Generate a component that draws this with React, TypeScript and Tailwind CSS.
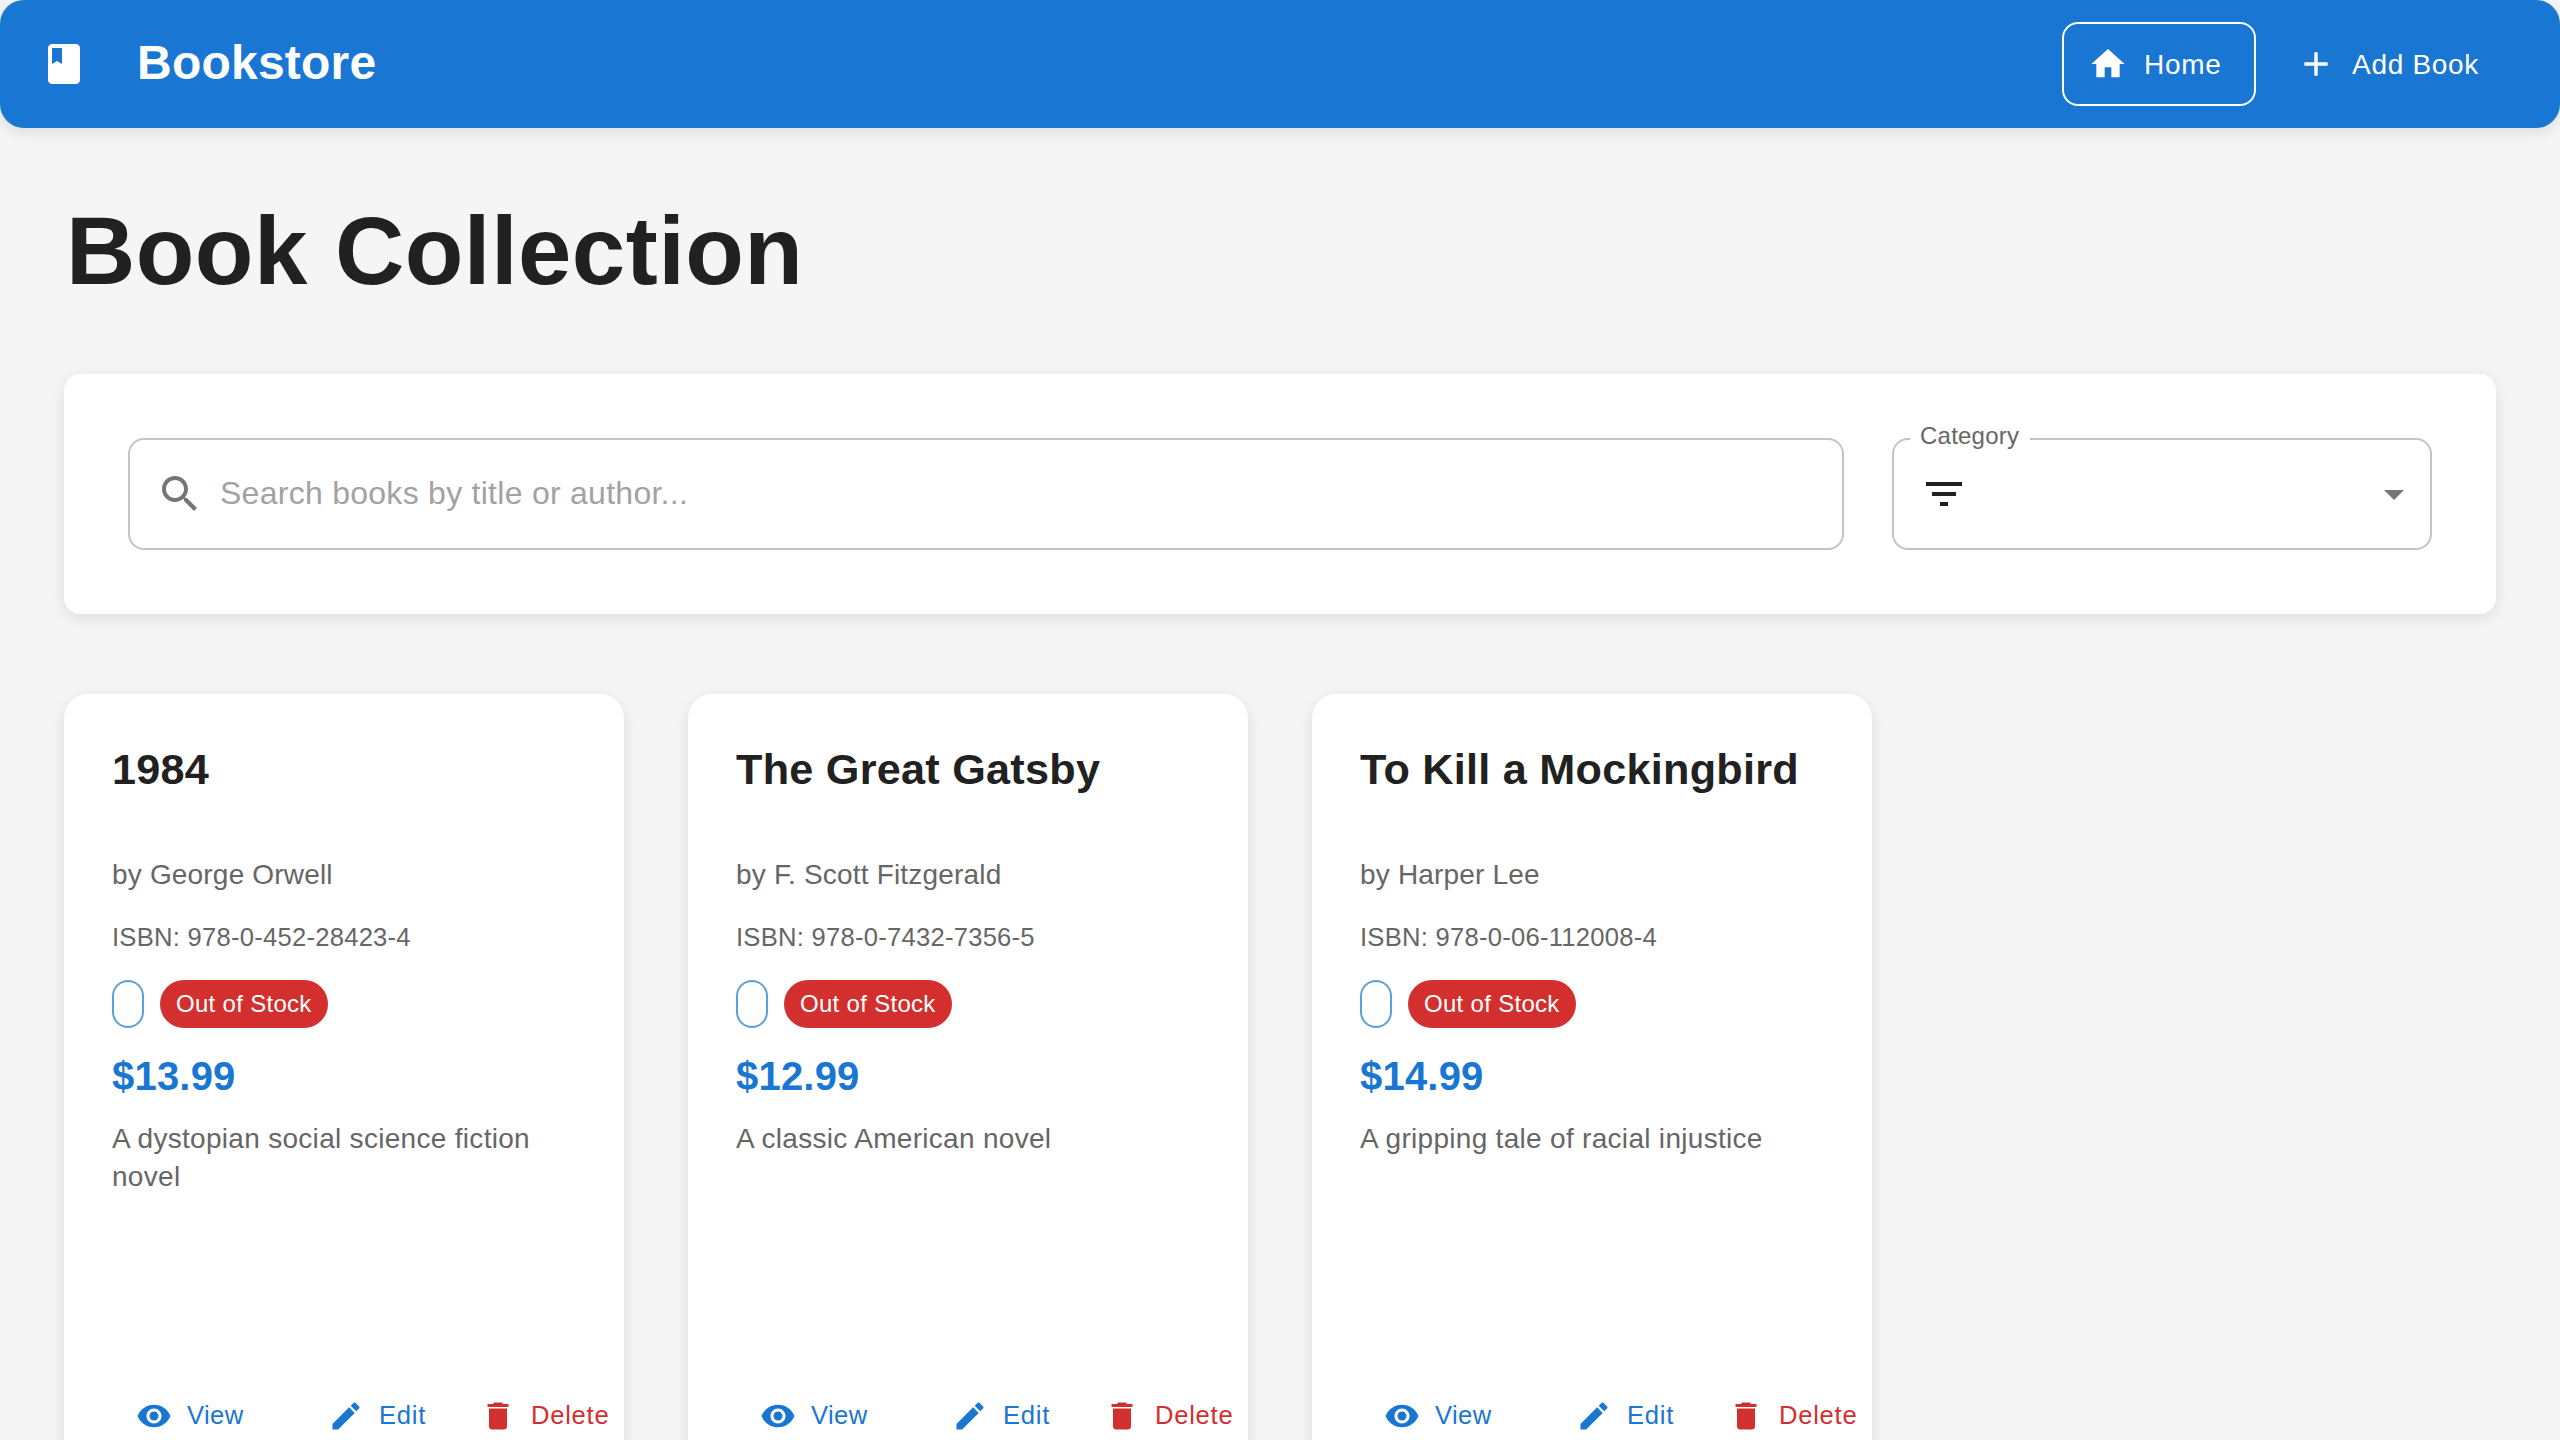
import type { ReactNode } from "react";

type IconProps = { d: string; className: string };

function Icon({ d, className }: IconProps) {
  return (
    <svg viewBox="0 0 24 24" fill="currentColor" className={`shrink-0 ${className}`} aria-hidden="true">
      <path d={d} />
    </svg>
  );
}

const icons = {
  book: "M18 2H6c-1.1 0-2 .9-2 2v16c0 1.1.9 2 2 2h12c1.1 0 2-.9 2-2V4c0-1.100-.9-2-2-2zM6 4h5v8l-2.500-1.500L6 12V4z",
  home: "M10 20v-6h4v6h5v-8h3L12 3 2 12h3v8z",
  add: "M19 13h-6v6h-2v-6H5v-2h6V5h2v6h6v2z",
  search:
    "M15.500 14h-.79l-.28-.27C15.410 12.590 16 11.110 16 9.500 16 5.910 13.090 3 9.500 3S3 5.910 3 9.500 5.910 16 9.500 16c1.610 0 3.090-.59 4.230-1.570l.27.28v.79l5 4.990L20.490 19l-4.990-5zm-6 0C7.010 14 5 11.990 5 9.500S7.010 5 9.500 5 14 7.010 14 9.500 11.990 14 9.500 14z",
  filter: "M10 18h4v-2h-4v2zM3 6v2h18V6H3zm3 7h12v-2H6v2z",
  caret: "M7 10l5 5 5-5z",
  view: "M12 4.500C7 4.500 2.730 7.610 1 12c1.730 4.390 6 7.500 11 7.500s9.270-3.110 11-7.500c-1.730-4.390-6-7.500-11-7.500zM12 17c-2.760 0-5-2.240-5-5s2.240-5 5-5 5 2.240 5 5-2.240 5-5 5zm0-8c-1.660 0-3 1.340-3 3s1.340 3 3 3 3-1.340 3-3-1.340-3-3-3z",
  edit: "M3 17.250V21h3.750L17.810 9.940l-3.750-3.750L3 17.250zM20.710 7.040c.39-.39.39-1.020 0-1.410l-2.340-2.340c-.39-.39-1.020-.39-1.410 0l-1.830 1.830 3.750 3.750 1.830-1.830z",
  remove: "M6 19c0 1.100.9 2 2 2h8c1.100 0 2-.9 2-2V7H6v12zM19 4h-3.500l-1-1h-5l-1 1H5v2h14V4z",
};

type Book = { title: string; author: string; isbn: string; price: string; description: string };

const books: Book[] = [
  {
    title: "1984",
    author: "George Orwell",
    isbn: "978-0-452-28423-4",
    price: "$13.99",
    description: "A dystopian social science fiction novel",
  },
  {
    title: "The Great Gatsby",
    author: "F. Scott Fitzgerald",
    isbn: "978-0-7432-7356-5",
    price: "$12.99",
    description: "A classic American novel",
  },
  {
    title: "To Kill a Mockingbird",
    author: "Harper Lee",
    isbn: "978-0-06-112008-4",
    price: "$14.99",
    description: "A gripping tale of racial injustice",
  },
];

function Header() {
  return (
    <header className="flex h-32 items-center justify-between rounded-3xl bg-[#1976d2] pr-12 pl-10 text-white shadow-[0_4px_16px_rgba(0,0,0,0.1)]">
      <div className="flex items-center gap-[49px]">
        <Icon d={icons.book} className="size-12" />
        <div className="mb-[3px] text-[48px] leading-[53px] font-bold tracking-[0.22px]">Bookstore</div>
      </div>
      <nav className="flex items-center gap-4 text-[28px] leading-[31px] tracking-[0.7px]">
        <button className="flex h-[84px] w-[194px] items-center gap-4 rounded-2xl border-2 border-white pl-6">
          <Icon d={icons.home} className="size-10" />
          <span className="pt-px">Home</span>
        </button>
        <button className="flex h-[84px] w-60 items-center gap-4 rounded-2xl pl-6">
          <Icon d={icons.add} className="size-10" />
          <span className="pt-px">Add Book</span>
        </button>
      </nav>
    </header>
  );
}

function Filters() {
  return (
    <section className="mt-[70px] flex gap-12 rounded-2xl bg-white p-16 shadow-[0_4px_16px_rgba(0,0,0,0.1)]">
      <div className="flex h-28 flex-1 items-center gap-4 rounded-2xl border-2 border-[#c4c4c4] px-[26px]">
        <Icon d={icons.search} className="size-12 text-[#757575]" />
        <span className="mb-[2px] text-[32px] leading-[36px] tracking-[0.27px] text-[#a2a2a2]">
          Search books by title or author...
        </span>
      </div>
      <div className="relative flex h-28 w-[540px] items-center justify-between rounded-2xl border-2 border-[#c4c4c4] pr-3 pl-[26px]">
        <span className="absolute -top-[18px] left-4 w-[120px] bg-white pl-[10px] text-[24px] leading-[27px] tracking-[0.225px] text-[#666666]">
          Category
        </span>
        <Icon d={icons.filter} className="size-12 text-[#212121]" />
        <Icon d={icons.caret} className="size-12 text-[#757575]" />
      </div>
    </section>
  );
}

function Action({ icon, className, children }: { icon: string; className: string; children: ReactNode }) {
  return (
    <button className={`flex shrink-0 items-start gap-[15px] ${className}`}>
      <Icon d={icon} className="size-9" />
      <span>{children}</span>
    </button>
  );
}

function BookCard({ book }: { book: Book }) {
  return (
    <article className="flex h-[800px] flex-col rounded-3xl bg-white px-12 pt-[50px] shadow-[0_4px_16px_rgba(0,0,0,0.1)]">
      <h2 className="text-[43.2px] leading-[50px] font-bold tracking-[0.26px] whitespace-nowrap text-[#212121]">
        {book.title}
      </h2>
      <p className="mt-[61px] text-[28px] leading-[39px] tracking-[0.18px] text-[#666666]">by {book.author}</p>
      <p className="mt-[25px] text-[25.6px] leading-[36px] tracking-[0.25px] text-[#666666]">ISBN: {book.isbn}</p>
      <div className="mt-[25px] flex gap-4">
        <span className="h-12 w-8 rounded-full border-2 border-[#5e9fe0]" />
        <span className="h-12 rounded-full bg-[#d32f2f] px-4 text-[24px] leading-[47px] tracking-[0.3px] text-white">
          Out of Stock
        </span>
      </div>
      <p className="mt-6 text-[40px] leading-[48px] font-bold tracking-[0.2px] text-[#1976d2]">{book.price}</p>
      <p className="mt-5 h-[278px] text-[28px] leading-[37.8px] tracking-[0.3px] text-[#666666]">
        {book.description}
      </p>
      <div className="flex pl-6 text-[25.6px] leading-[34px] text-[#1976d2]">
        <Action icon={icons.view} className="w-48 tracking-[0.4px]">
          View
        </Action>
        <Action icon={icons.edit} className="w-[152px] tracking-[0.731px]">
          Edit
        </Action>
        <Action icon={icons.remove} className="tracking-[0.731px] text-[#d32f2f]">
          Delete
        </Action>
      </div>
    </article>
  );
}

export default function App() {
  return (
    <div className="h-[1440px] w-full overflow-hidden bg-[#f5f5f5] font-['Liberation_Sans',Arial,sans-serif]">
      <Header />
      <main className="px-16 pt-[69px]">
        <h1 className="pl-[2px] text-[96px] leading-[107px] font-bold tracking-[0.45px] text-[#212121]">
          Book Collection
        </h1>
        <Filters />
        <section className="mt-20 grid grid-cols-4 gap-16">
          {books.map((book) => (
            <BookCard key={book.isbn} book={book} />
          ))}
        </section>
      </main>
    </div>
  );
}
